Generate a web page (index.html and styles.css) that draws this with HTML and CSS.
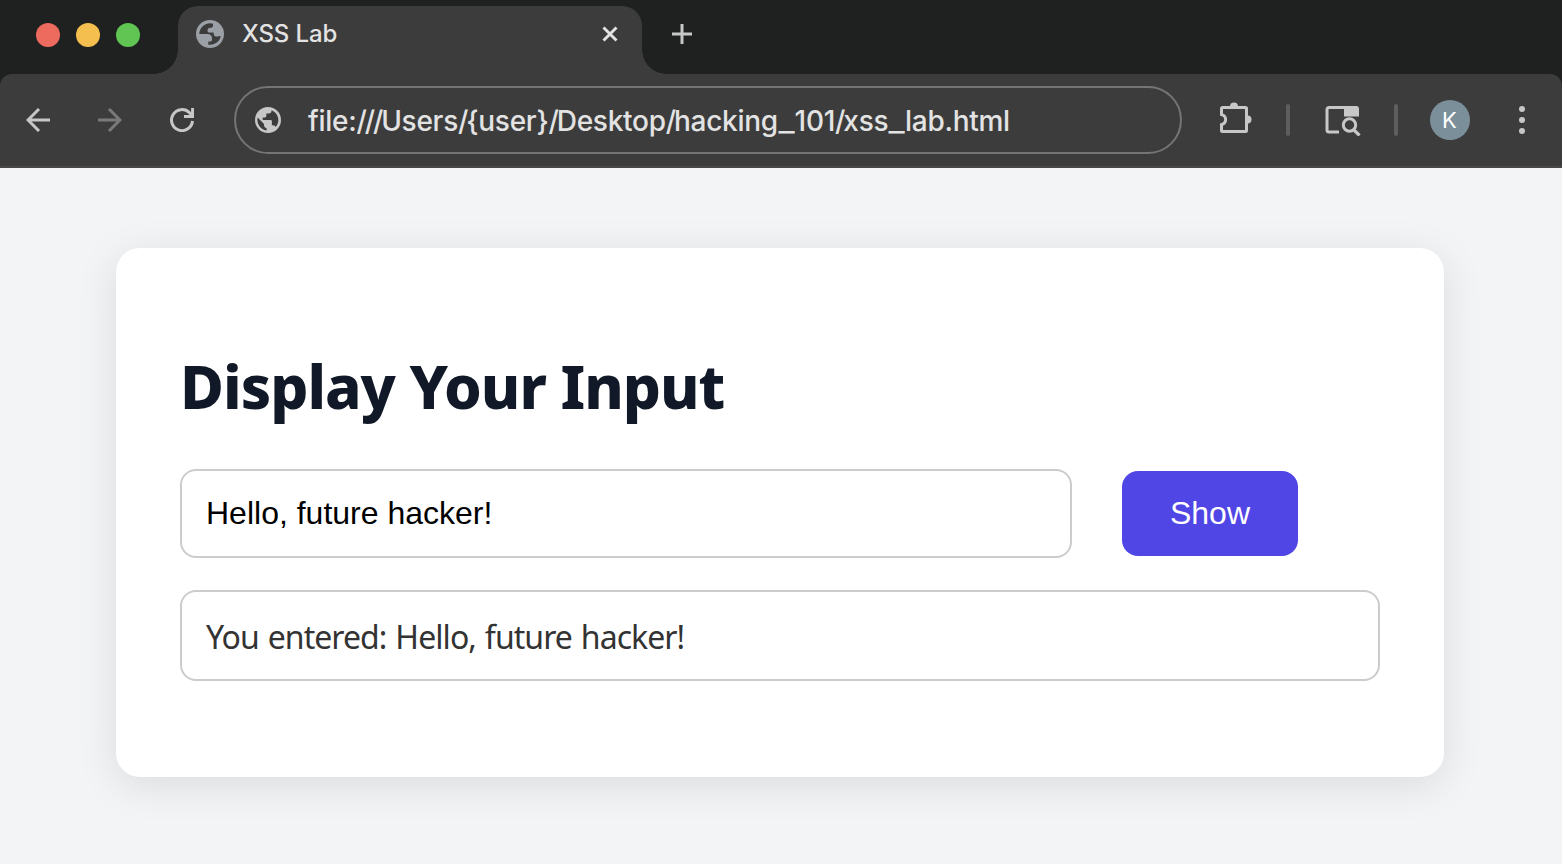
FILE: index.html
```html
<!DOCTYPE html>
<html lang="en">
<head>
<meta charset="utf-8">
<title>XSS Lab</title>
<link rel="stylesheet" href="styles.css">
</head>
<body>
<header class="browser">
  <div class="tabstrip">
    <div class="lights"><span class="light red"></span><span class="light yellow"></span><span class="light green"></span></div>
    <div class="tab">
      <svg class="favicon" viewBox="0 0 28 28"><circle cx="14" cy="14" r="14" fill="#9aa0a6"/><path d="M3.300 14A10.800 10.800 0 0 1 17 3.700V6c0 1-1 1.800-2.500 1.800-2 0-3 1-3 2.600s1 2.200 2.500 2.200h3c.5 0 .8.500.8 1.300 0 2 1.200 2.700 3.200 2.700 1.500 0 2-.7 3.700-.7A10.800 10.800 0 0 1 12.300 24.700V21.500h2.200c1-.1 1.500-.8 1.500-2v-1c0-3-1.700-4.500-4.500-4.500z" fill="#3c3c3c"/></svg>
      <span class="tab-title">XSS Lab</span>
      <svg class="close" viewBox="0 0 16 16"><path d="M1.500 1.500l13 13M14.500 1.500l-13 13" stroke="#e3e3e3" stroke-width="2.900" fill="none"/></svg>
    </div>
    <svg class="plus" viewBox="0 0 20 20"><path d="M10 0v20M0 10h20" stroke="#c7c7c7" stroke-width="3"/></svg>
  </div>
  <div class="toolbar">
    <nav class="nav">
      <svg viewBox="0 0 24 24"><path d="M24 12H2M13 1L2 12l11 11" fill="none" stroke="#c7c7c7" stroke-width="3"/></svg>
      <svg viewBox="0 0 24 24"><path d="M0 12h22M11 1l11 11-11 11" fill="none" stroke="#7a7a7a" stroke-width="3"/></svg>
      <svg viewBox="0 0 24 24"><path d="M22.500 13A10.500 10.500 0 1 1 19.400 4.600l2.700 3.200M22.600 0v8.600H14" fill="none" stroke="#c7c7c7" stroke-width="3"/></svg>
    </nav>
    <div class="omnibox">
      <svg class="globe" viewBox="0 0 26 26"><circle cx="13" cy="13" r="13" fill="#c7c7c7"/><path fill="#3c3c3c" d="M2.700 10.500L9 17v1.300c0 1.400 1 2.600 2.600 2.600v2.500A10.500 10.500 0 0 1 2.700 10.500zM16.500 3.200v.8c0 1.500-1 2.500-2.600 2.500h-2.600v2.600c0 .8-.6 1.300-1.300 1.300H7.700V13h7.900c.8 0 1.300.6 1.300 1.300v3.900h1.300c1.200 0 2.100.7 2.500 1.800A10.500 10.500 0 0 0 16.500 3.200z"/></svg>
      <span class="url">file:<i>///</i>Users<i>/</i>{user}<i>/</i>Desktop<i>/</i>hacking<b>_</b>101<i>/</i>xss<b>_</b>lab.html</span>
    </div>
    <div class="actions">
      <svg class="puzzle" viewBox="0 0 32 32"><path d="M2.500 5.500h23a1 1 0 0 1 1 1v22a1 1 0 0 1-1 1h-23a1 1 0 0 1-1-1V22.600a5.100 5.100 0 0 0 0-10V6.500a1 1 0 0 1 1-1z" fill="none" stroke="#c7c7c7" stroke-width="3"/><path d="M10 4.500a4 4 0 0 1 8 0zM27.500 13.500a4 4 0 0 1 0 8z" fill="#c7c7c7"/></svg>
      <span class="divider"></span>
      <svg class="search-tab" viewBox="0 0 36 32"><path d="M14 28H4a2 2 0 0 1-2-2V5.500a2 2 0 0 1 2-2h28" fill="none" stroke="#c7c7c7" stroke-width="3"/><path d="M19 2h12a3 3 0 0 1 3 3v7.500H19z" fill="#c7c7c7"/><circle cx="24.500" cy="21" r="6.200" fill="none" stroke="#c7c7c7" stroke-width="3"/><path d="M28.500 25.500l6 6" stroke="#c7c7c7" stroke-width="3.200"/></svg>
      <span class="divider"></span>
      <span class="avatar">K</span>
      <svg class="menu" viewBox="0 0 6 28" fill="#c7c7c7"><circle cx="3" cy="3" r="3"/><circle cx="3" cy="14" r="3"/><circle cx="3" cy="25" r="3"/></svg>
    </div>
  </div>
</header>
<main class="page">
  <section class="card">
    <h1 class="title">Display Your Input</h1>
    <div class="form">
      <input class="field" type="text" value="Hello, future hacker!">
      <button class="show" type="button">Show</button>
    </div>
    <div class="output">You entered: Hello, future hacker!</div>
  </section>
</main>
</body>
</html>
```
FILE: styles.css
```css
* { box-sizing: border-box; }
body { margin: 0; width: 1562px; height: 864px; overflow: hidden; background: #f3f4f6; font-family: "Noto Sans", sans-serif; }
svg { display: block; flex: none; }
.browser { background: #1f2120; font-family: Inter, sans-serif; }
.tabstrip { display: flex; height: 74px; }
.lights { display: flex; gap: 16px; padding: 23px 0 0 36px; width: 178px; }
.light { width: 24px; height: 24px; border-radius: 50%; }
.red { background: #ed6a5e; }
.yellow { background: #f5bf4f; }
.green { background: #61c554; }
.tab { position: relative; display: flex; align-items: center; width: 464px; height: 68px; margin-top: 6px; padding: 0 24px 12px 18px; background: #3c3c3c; border-radius: 20px 20px 0 0; }
.tab::before, .tab::after { content: ""; position: absolute; bottom: 0; width: 24px; height: 24px; }
.tab::before { right: 100%; background: radial-gradient(circle at 0 0, transparent 23.5px, #3c3c3c 24px); }
.tab::after { left: 100%; background: radial-gradient(circle at 100% 0, transparent 23.5px, #3c3c3c 24px); }
.favicon { width: 28px; height: 28px; }
.tab-title { flex: 1; margin-left: 18px; color: #e3e3e3; font-size: 24px; line-height: 30px; font-weight: 500; letter-spacing: -.1px; }
.close { width: 16px; height: 16px; }
.plus { width: 20px; height: 20px; margin: 24px 0 0 30px; }
.toolbar { display: flex; align-items: center; height: 94px; padding-left: 26px; background: #3c3c3c; border-bottom: 2px solid #474747; border-radius: 12px 12px 0 0; }
.nav { display: flex; gap: 48px; width: 208px; }
.nav svg { width: 24px; height: 24px; }
.omnibox { display: flex; align-items: center; width: 948px; height: 68px; padding-left: 19px; border: 2px solid #757575; border-radius: 34px; }
.globe { width: 26px; height: 26px; }
.url { margin-left: 27px; padding-top: 1px; color: #e3e3e3; font-size: 28px; line-height: 34px; font-weight: 500; letter-spacing: -.270px; white-space: nowrap; font-feature-settings: "calt" 0; }
.url i { font-style: normal; letter-spacing: -2.100px; }
.url b { display: inline-block; font-weight: 500; transform: scaleX(1.25); padding: 0 2px; }
.actions { display: flex; align-items: center; margin-left: 38px; }
.puzzle { width: 32px; height: 32px; margin-top: -4px; }
.divider { width: 4px; height: 32px; margin-left: 34px; border-radius: 2px; background: #5e5e5e; }
.search-tab { width: 36px; height: 32px; margin-left: 35px; }
.search-tab + .divider { margin-left: 33px; }
.avatar { width: 40px; height: 40px; margin-left: 32px; border-radius: 50%; background: #7b8f9b; color: #fff; font-size: 22px; line-height: 40px; text-align: center; text-indent: -1px; }
.menu { width: 6px; height: 28px; margin-left: 49px; }
.page { padding: 80px 118px 0 116px; }
.card { height: 529px; padding: 96px 64px 0; background: #fff; border-radius: 24px; box-shadow: 0 8px 40px rgba(0,0,0,.1); }
.title { margin: 0; height: 125px; color: #111827; font-size: 60px; line-height: 84px; font-weight: 800; letter-spacing: -1px; white-space: nowrap; }
.form { display: flex; align-items: center; gap: 50px; }
.field { width: 892px; height: 89px; padding: 0 24px; border: 2px solid #ccc; border-radius: 16px; background: #fff; color: #000; font: 32px "Liberation Sans", Arial, sans-serif; outline: 0; }
.show { width: 176px; height: 85px; padding: 0; border: 0; border-radius: 16px; background: #4f46e5; color: #fff; font: 32px "Liberation Sans", Arial, sans-serif; }
.output { height: 91px; margin-top: 32px; padding: 1px 24px 0; border: 2px solid #ccc; border-radius: 16px; color: #333; font-size: 32px; line-height: 88px; letter-spacing: -.940px; word-spacing: 1.500px; white-space: nowrap; }
```
